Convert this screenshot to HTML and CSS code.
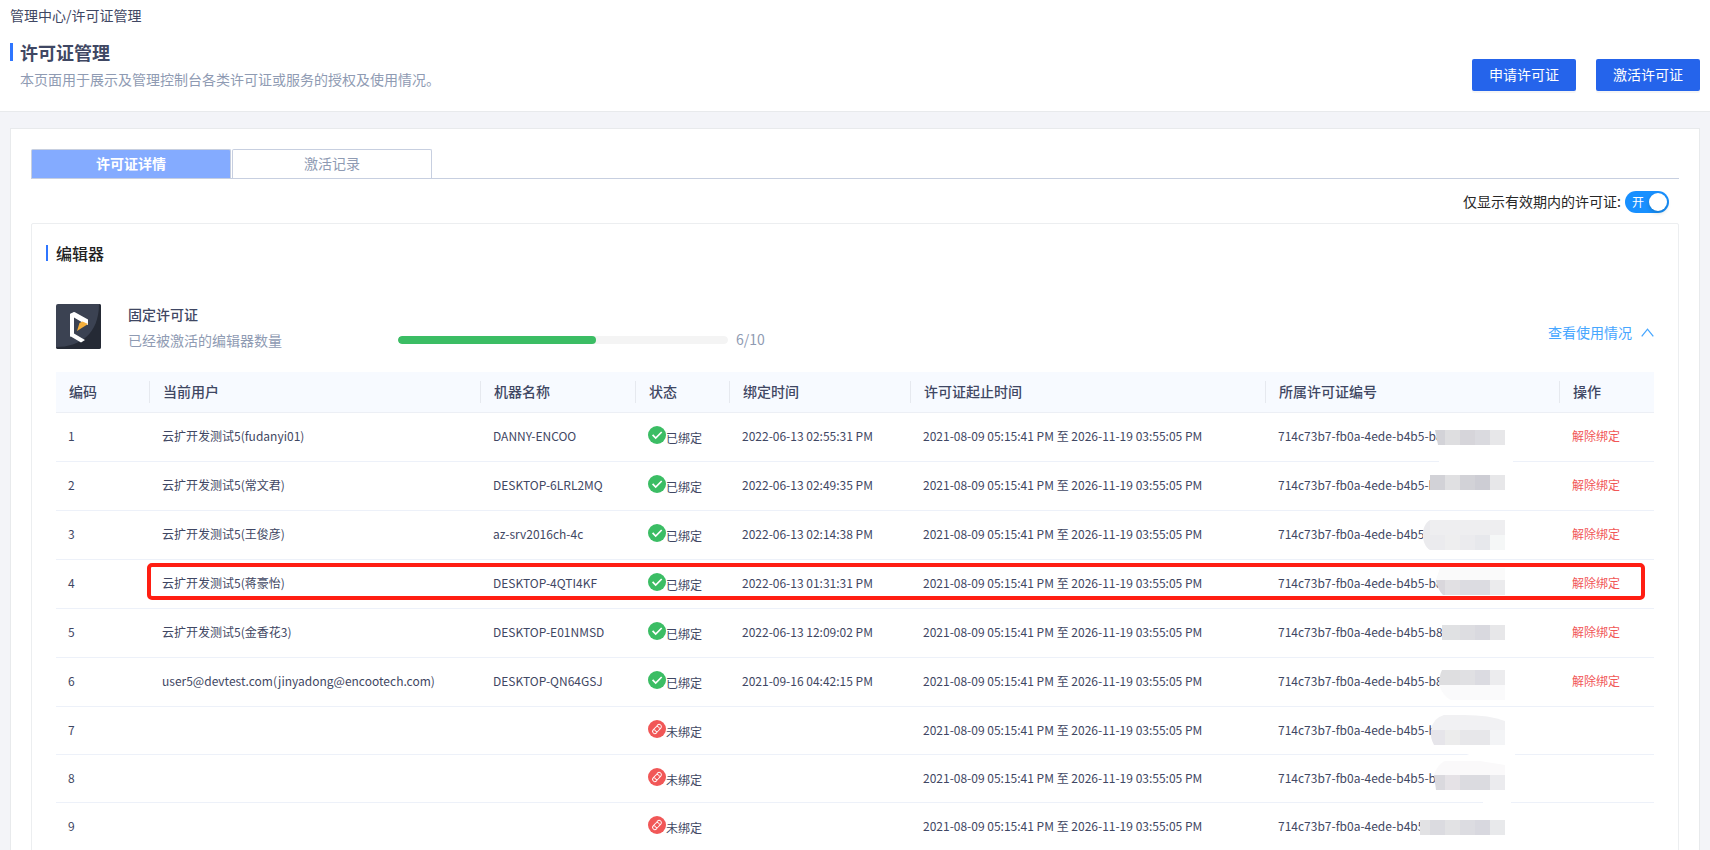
FILE: index.html
```html
<!DOCTYPE html>
<html lang="zh-CN">
<head>
<meta charset="utf-8">
<title>许可证管理</title>
<link rel="stylesheet" href="styles.css">
</head>
<body>
<svg class="sprite" aria-hidden="true">
  <symbol id="ok" viewBox="0 0 18 18"><circle cx="9" cy="9" r="9" fill="#3bbd64"/><path d="M4.6 8.8l3.1 3.2 6-6" fill="none" stroke="#fff" stroke-width="1.7"/></symbol>
  <symbol id="unlinked" viewBox="0 0 18 18"><circle cx="9" cy="9" r="9" fill="#f15757"/><g transform="rotate(-48 9 9)" fill="none" stroke="#fff" stroke-width=".95" stroke-linecap="round"><path d="M6.600 11.200H5.800a2.200 2.200 0 0 1 0-4.400h3.600a2.200 2.200 0 0 1 1.700 3.500"/><path d="M11.400 6.800h.8a2.200 2.200 0 0 1 0 4.400H8.600a2.200 2.200 0 0 1-1.700-3.500"/></g></symbol>
</svg>

<header class="page-header">
  <nav class="breadcrumb"><a href="#">管理中心</a>/<a href="#">许可证管理</a></nav>
  <div class="header-row">
    <div>
      <h1 class="page-title">许可证管理</h1>
      <p class="page-desc">本页面用于展示及管理控制台各类许可证或服务的授权及使用情况。</p>
    </div>
    <div class="actions">
      <button class="btn" type="button">申请许可证</button>
      <button class="btn" type="button">激活许可证</button>
    </div>
  </div>
</header>

<main class="card">
  <div class="tabs" role="tablist">
    <button class="tab tab-active" type="button" role="tab" aria-selected="true">许可证详情</button>
    <button class="tab" type="button" role="tab" aria-selected="false">激活记录</button>
  </div>

  <div class="filter">
    <label for="valid-only">仅显示有效期内的许可证:</label>
    <span class="switch">
      <input id="valid-only" type="checkbox" role="switch" checked>
      <span class="switch-text">开</span>
    </span>
  </div>

  <section class="panel">
    <h2 class="panel-title">编辑器</h2>

    <div class="license">
      <svg class="logo" viewBox="0 0 45 45" aria-hidden="true">
        <rect width="45" height="45" rx="2" fill="#3b4252"/>
        <path d="M43 0a2 2 0 0 1 2 2v41a2 2 0 0 1-2 2H2a2 2 0 0 1-2-2C24 43 43 30 43 0z" fill="#252a35"/>
        <path d="M14 10l4-2v21l-4 4z" fill="#e4e7ec"/>
        <path d="M14 10l4.500-2L32 15.500V21l-3-1-11-6.500v16L29 36l-4 2.500L14 32z" fill="#fff"/>
        <path d="M21 27l2.500-8 3-1.500L32 20z" fill="#f5b03c"/>
      </svg>
      <div class="license-text">
        <h3 class="license-name">固定许可证</h3>
        <label class="license-desc" for="used">已经被激活的编辑器数量</label>
      </div>
      <div class="usage">
        <progress id="used" class="bar" value="6" max="10"></progress>
        <span>6/10</span>
      </div>
      <a class="toggle" href="#">查看使用情况
        <svg width="13" height="9" viewBox="0 0 13 9" aria-hidden="true"><path d="M.7 8.300L6.500 1.200l5.800 7.100" fill="none" stroke="currentColor" stroke-width="1.300"/></svg>
      </a>
    </div>

    <table class="grid">
      <colgroup><col class="c-no"><col class="c-user"><col class="c-host"><col class="c-no"><col class="c-time"><col class="c-range"><col class="c-lic"><col class="c-no"></colgroup>
      <thead>
        <tr><th>编码</th><th>当前用户</th><th>机器名称</th><th>状态</th><th>绑定时间</th><th>许可证起止时间</th><th>所属许可证编号</th><th>操作</th></tr>
      </thead>
      <tbody>
        <tr>
          <td>1</td><td>云扩开发测试5(fudanyi01)</td><td>DANNY-ENCOO</td>
          <td><span class="status"><svg><use href="#ok"/></svg><span>已绑定</span></span></td>
          <td>2022-06-13 02:55:31 PM</td><td>2021-08-09 05:15:41 PM 至 2026-11-19 03:55:05 PM</td>
          <td>714c73b7-fb0a-4ede-b4b5-b8<svg class="mask" viewBox="0 0 100 50"><path fill="#fff" d="M24 44h74v6H24z"/><path fill="#d3d3d8" d="M20 17h10v15h-7z"/><path fill="#dedee0" d="M30 17h15v15H30z"/><path fill="#d6d5da" d="M45 17h15v15H45z"/><path fill="#dadadf" d="M60 17h15v15H60z"/><path fill="#e7e7e9" d="M75 17h15v15H75z"/></svg></td>
          <td><a class="unbind" href="#">解除绑定</a></td>
        </tr>
        <tr>
          <td>2</td><td>云扩开发测试5(常文君)</td><td>DESKTOP-6LRL2MQ</td>
          <td><span class="status"><svg><use href="#ok"/></svg><span>已绑定</span></span></td>
          <td>2022-06-13 02:49:35 PM</td><td>2021-08-09 05:15:41 PM 至 2026-11-19 03:55:05 PM</td>
          <td>714c73b7-fb0a-4ede-b4b5-b<svg class="mask" viewBox="0 0 100 50"><path fill="#fff" d="M15 28h15v8H15z"/><path fill="#d2d2d7" d="M15 13h15v15H15z"/><path fill="#e0e0e2" d="M30 13h15v15H30z"/><path fill="#d2d2d7" d="M45 13h15v15H45z"/><path fill="#cdcdd4" d="M60 13h15v15H60z"/><path fill="#e7e7e9" d="M75 13h15v15H75z"/></svg></td>
          <td><a class="unbind" href="#">解除绑定</a></td>
        </tr>
        <tr>
          <td>3</td><td>云扩开发测试5(王俊彦)</td><td>az-srv2016ch-4c</td>
          <td><span class="status"><svg><use href="#ok"/></svg><span>已绑定</span></span></td>
          <td>2022-06-13 02:14:38 PM</td><td>2021-08-09 05:15:41 PM 至 2026-11-19 03:55:05 PM</td>
          <td>714c73b7-fb0a-4ede-b4b5-<svg class="mask" viewBox="0 0 100 50"><path fill="#ebebee" d="M15 9C5 15 6 34 15 39z"/><path fill="#eeeef0" d="M15 9h75v15H15z"/><path fill="#ebebee" d="M15 24h15v15H15z"/><path fill="#eeeeef" d="M30 24h15v15H30z"/><path fill="#ebebee" d="M45 24h15v15H45z"/><path fill="#e7e8ec" d="M60 24h15v15H60z"/><path fill="#f5f7f7" d="M75 24h15v15H75z"/></svg></td>
          <td><a class="unbind" href="#">解除绑定</a></td>
        </tr>
        <tr class="row-marked">
          <td>4</td><td>云扩开发测试5(蒋豪怡)</td><td>DESKTOP-4QTI4KF</td>
          <td><span class="status"><svg><use href="#ok"/></svg><span>已绑定</span></span></td>
          <td>2022-06-13 01:31:31 PM</td><td>2021-08-09 05:15:41 PM 至 2026-11-19 03:55:05 PM</td>
          <td>714c73b7-fb0a-4ede-b4b5-b8<svg class="mask" viewBox="0 0 100 50"><path fill="#fafafa" d="M25 8h65v12H21z"/><path fill="#d9d7dc" d="M21 20h9v15h-2q-6-6-7-15z"/><path fill="#e1e0e3" d="M30 20h15v15H30z"/><path fill="#dcdce1" d="M45 20h30v15H45z"/><path fill="#ebebed" d="M75 20h15v15H75z"/></svg></td>
          <td><a class="unbind" href="#">解除绑定</a><span class="marker"></span></td>
        </tr>
        <tr>
          <td>5</td><td>云扩开发测试5(金香花3)</td><td>DESKTOP-E01NMSD</td>
          <td><span class="status"><svg><use href="#ok"/></svg><span>已绑定</span></span></td>
          <td>2022-06-13 12:09:02 PM</td><td>2021-08-09 05:15:41 PM 至 2026-11-19 03:55:05 PM</td>
          <td>714c73b7-fb0a-4ede-b4b5-b88<svg class="mask" viewBox="0 0 100 50"><path fill="#e0e1e3" d="M27 16h18v15H27z"/><path fill="#dddde1" d="M45 16h15v15H45z"/><path fill="#d9d9df" d="M60 16h15v15H60z"/><path fill="#e7e7e9" d="M75 16h15v15H75z"/></svg></td>
          <td><a class="unbind" href="#">解除绑定</a></td>
        </tr>
        <tr>
          <td>6</td><td>user5@devtest.com(jinyadong@encootech.com)</td><td>DESKTOP-QN64GSJ</td>
          <td><span class="status"><svg><use href="#ok"/></svg><span>已绑定</span></span></td>
          <td>2021-09-16 04:42:15 PM</td><td>2021-08-09 05:15:41 PM 至 2026-11-19 03:55:05 PM</td>
          <td>714c73b7-fb0a-4ede-b4b5-b8<svg class="mask" viewBox="0 0 100 50"><path fill="#fafafb" d="M24 27h66v15H36q-8-4-12-15z"/><path fill="#dedee0" d="M27 12h18v15H24q0-9 3-15z"/><path fill="#e0e0e3" d="M45 12h15v15H45z"/><path fill="#dbdbe1" d="M60 12h15v15H60z"/><path fill="#ececee" d="M75 12h15v15H75z"/></svg></td>
          <td><a class="unbind" href="#">解除绑定</a></td>
        </tr>
        <tr class="row-free">
          <td>7</td><td></td><td></td>
          <td><span class="status"><svg><use href="#unlinked"/></svg><span>未绑定</span></span></td>
          <td></td><td>2021-08-09 05:15:41 PM 至 2026-11-19 03:55:05 PM</td>
          <td>714c73b7-fb0a-4ede-b4b5-b<svg class="mask" viewBox="0 0 100 50"><path fill="#fff" d="M46 45h55v5H60z"/><path fill="#f1f1f3" d="M29 8h20q26 0 41 6v9H16Q18 11 29 8z"/><path fill="#e6e5ea" d="M16 23h14v15H19q-4-7-3-15z"/><path fill="#ececec" d="M30 23h15v15H30z"/><path fill="#e7e7ea" d="M45 23h30v15H45z"/><path fill="#f3f4f6" d="M75 23h15v15H75z"/></svg></td>
          <td></td>
        </tr>
        <tr class="row-free">
          <td>8</td><td></td><td></td>
          <td><span class="status"><svg><use href="#unlinked"/></svg><span>未绑定</span></span></td>
          <td></td><td>2021-08-09 05:15:41 PM 至 2026-11-19 03:55:05 PM</td>
          <td>714c73b7-fb0a-4ede-b4b5-b8<svg class="mask" viewBox="0 0 100 50"><path fill="#fff" d="M68 45h28v5H68z"/><path fill="#faf9fa" d="M30 6h35l25 4v10H19Q22 10 30 6z"/><path fill="#dad9de" d="M19 20h11v15h-9z"/><path fill="#e5e2e6" d="M30 20h15v15H30z"/><path fill="#dbdbe0" d="M45 20h30v15H45z"/><path fill="#ebebee" d="M75 20h15v15H75z"/></svg></td>
          <td></td>
        </tr>
        <tr class="row-free">
          <td>9</td><td></td><td></td>
          <td><span class="status"><svg><use href="#unlinked"/></svg><span>未绑定</span></span></td>
          <td></td><td>2021-08-09 05:15:41 PM 至 2026-11-19 03:55:05 PM</td>
          <td>714c73b7-fb0a-4ede-b4b5<svg class="mask" viewBox="0 0 100 50"><path fill="#e2e2e4" d="M5 17h10v15H5z"/><path fill="#dbdbe0" d="M15 17h15v15H15z"/><path fill="#e2e2e4" d="M30 17h15v15H30z"/><path fill="#dcdce1" d="M45 17h15v15H45z"/><path fill="#d8d8df" d="M60 17h15v15H60z"/><path fill="#e8e9eb" d="M75 17h15v15H75z"/></svg></td>
          <td></td>
        </tr>
      </tbody>
    </table>
  </section>
</main>
</body>
</html>
```
FILE: styles.css
```css
* { box-sizing: border-box; }

body {
  margin: 0;
  height: 100vh;
  overflow: hidden;
  background: #f3f4f8;
  color: #3f4763;
  font: 14px/22px "Noto Sans CJK SC", "Noto Sans", sans-serif;
}

h1, h2, h3, p { margin: 0; }
a { color: inherit; text-decoration: none; }
button { font: inherit; cursor: pointer; }
.sprite { display: none; }

.page-header {
  padding: 4px 10px 19px;
  background: #fff;
  border-bottom: 1px solid #e8eaec;
}
.header-row {
  display: flex;
  justify-content: space-between;
  align-items: flex-end;
  padding-top: 13px;
}
.page-title {
  display: flex;
  align-items: center;
  gap: 7px;
  font-size: 18px;
  line-height: 26px;
}
.page-title::before { content: ""; width: 3px; height: 18px; background: #2f76ff; }
.page-desc { padding: 3px 0 2px 10px; color: #8f9bb3; }
.actions { display: flex; gap: 20px; padding-bottom: 1px; }
.btn {
  height: 32px;
  padding: 0 17px 2px;
  border: 0;
  border-radius: 2px;
  background: #2564eb;
  color: #fff;
  box-shadow: 0 2px 0 rgba(0, 0, 0, 0.04);
}

.card {
  margin: 16px 10px 0;
  padding: 20px 20px 0;
  background: #fff;
  border: 1px solid #e8eaec;
}
.tabs { display: flex; gap: 1px; border-bottom: 1px solid #c7cfe0; }
.tab {
  width: 200px;
  height: 29px;
  padding: 0 0 2px;
  border: 1px solid #c7cfe0;
  border-bottom: 0;
  border-radius: 2px 2px 0 0;
  background: #fff;
  color: #8f9bb3;
}
.tab-active { background: #84abff; color: #fff; font-weight: bold; }

.filter {
  display: flex;
  justify-content: flex-end;
  gap: 4px;
  padding: 12px 10px 10px;
  color: #262626;
}
.filter label { line-height: 20px; }
.switch { display: grid; width: 44px; height: 22px; }
.switch input {
  grid-area: 1 / 1;
  display: flex;
  justify-content: flex-end;
  appearance: none;
  width: 44px;
  height: 22px;
  margin: 0;
  padding: 2px;
  border-radius: 11px;
  background: #1890ff;
}
.switch input::before {
  content: "";
  width: 18px;
  height: 18px;
  border-radius: 9px;
  background: #fff;
  box-shadow: 0 2px 4px rgba(0, 35, 11, 0.2);
}
.switch-text {
  grid-area: 1 / 1;
  padding-left: 7px;
  color: #fff;
  font-size: 12px;
  pointer-events: none;
}

.panel { padding: 17px 24px 0; border: 1px solid #eceef0; border-radius: 2px; }
.panel-title {
  display: flex;
  align-items: center;
  gap: 8px;
  margin-left: -10px;
  color: #222;
  font-size: 16px;
  line-height: 24px;
  font-weight: 500;
}
.panel-title::before { content: ""; width: 2px; height: 16px; background: #2f76ff; }

.license { display: flex; align-items: center; padding: 36px 0 19px; }
.logo { width: 45px; height: 45px; margin: 0 27px 2px 0; }
.license-text { width: 270px; line-height: 26px; }
.license-name { font-size: 14px; line-height: 26px; font-weight: 500; }
.license-desc { color: #8f9bb3; }
.usage {
  display: flex;
  align-items: center;
  align-self: flex-end;
  gap: 8px;
  line-height: 26px;
  color: #8f9bb3;
}
.usage span { padding-bottom: 2px; line-height: 24px; }
.bar {
  appearance: none;
  width: 330px;
  height: 8px;
  border: 0;
  border-radius: 4px;
  overflow: hidden;
}
.bar::-webkit-progress-bar { background: #f4f4f4; border-radius: 4px; }
.bar::-webkit-progress-value { background: #3bbd64; border-radius: 4px; }
.toggle {
  display: flex;
  align-items: center;
  gap: 9px;
  margin-left: auto;
  padding-top: 10px;
  color: #46a6ff;
}

.grid { width: 100%; table-layout: fixed; border-collapse: separate; border-spacing: 0; font-size: 12px; }
.c-no { width: 94px; }
.c-user { width: 331px; }
.c-host { width: 155px; }
.c-time { width: 181px; }
.c-range { width: 355px; }
.c-lic { width: 294px; }
.grid th {
  height: 41px;
  padding: 0 13px 2px;
  border-bottom: 1px solid #eceff5;
  background: linear-gradient(#e6e9ef, #e6e9ef) right center / 1px 22px no-repeat #f7faff;
  font-size: 14px;
  font-weight: 500;
  text-align: left;
}
.grid th:last-child { background: #f7faff; }
.grid td {
  position: relative;
  height: 49px;
  padding: 0 12px 2px;
  border-bottom: 1px solid #edf1f9;
  white-space: nowrap;
}
.grid .row-free td { height: 48px; }
.status { display: flex; align-items: flex-start; padding-top: 1px; line-height: 18px; }
.status svg { width: 18px; height: 18px; }
.status span { margin-top: 3px; }
.unbind { color: #f15757; }
.mask { position: absolute; left: 149px; top: 0; width: 100px; height: 50px; }

.grid .row-marked { position: relative; }
.grid .row-marked td:last-child { position: static; }
.marker {
  position: absolute;
  inset: 3px 9px 9px 91px;
  border: 4px solid #ff1e12;
  border-radius: 5px;
  pointer-events: none;
}
```
